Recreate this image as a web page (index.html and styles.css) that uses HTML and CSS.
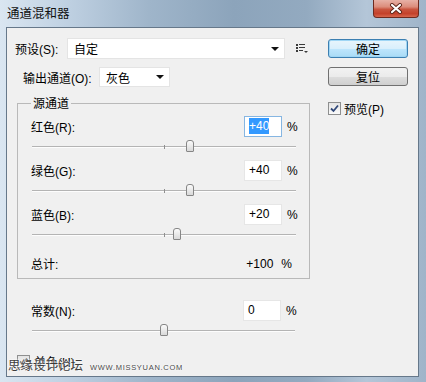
FILE: index.html
```html
<!DOCTYPE html>
<html>
<head>
    <meta charset="utf-8">
    <title>通道混和器</title>
    <link rel="stylesheet" href="styles.css">
</head>
<body>
<div class="window">
    <div class="titlebar">
        <span class="title">通道混和器</span>
        <span class="close">
            <svg width="14" height="11" viewBox="0 0 14 11">
                <path d="M3 2 L11 9 M11 2 L3 9" stroke="#5a2318" stroke-width="4" stroke-linecap="round"/>
                <path d="M3 2 L11 9 M11 2 L3 9" stroke="#fff" stroke-width="2.2" stroke-linecap="round"/>
            </svg>
        </span>
    </div>

    <div class="client">
        <div class="main">
            <div class="preset-row">
                <label class="lbl">预设(S):</label>
                <div class="select preset-select"><span>自定</span><i class="arrow"></i></div>
                <svg class="menu-icon" width="12" height="11" viewBox="0 0 12 11">
                    <rect x="0" y="1" width="2" height="2" fill="#3a3a3a"/>
                    <rect x="0" y="4" width="2" height="2" fill="#3a3a3a"/>
                    <rect x="0" y="7" width="2" height="2" fill="#3a3a3a"/>
                    <rect x="3" y="1" width="6" height="1" fill="#3a3a3a"/>
                    <rect x="3" y="4" width="6" height="1" fill="#3a3a3a"/>
                    <rect x="3" y="7" width="4" height="1" fill="#3a3a3a"/>
                    <path d="M8 8 L12 8 L10 10 Z" fill="#3a3a3a"/>
                </svg>
            </div>

            <div class="output-row">
                <label class="lbl">输出通道(O):</label>
                <div class="select output-select"><span>灰色</span><i class="arrow"></i></div>
            </div>

            <fieldset class="source">
                <legend>源通道</legend>

                <div class="channel">
                    <div class="head">
                        <label>红色(R):</label>
                        <span class="num focus"><span class="sel">+40</span></span>
                        <span class="pct">%</span>
                    </div>
                    <div class="slider"><div class="track"></div><span class="tick"></span><span class="thumb" style="left: 60%"></span></div>
                </div>

                <div class="channel">
                    <div class="head">
                        <label>绿色(G):</label>
                        <span class="num">+40</span>
                        <span class="pct">%</span>
                    </div>
                    <div class="slider"><div class="track"></div><span class="tick"></span><span class="thumb" style="left: 60%"></span></div>
                </div>

                <div class="channel">
                    <div class="head">
                        <label>蓝色(B):</label>
                        <span class="num">+20</span>
                        <span class="pct">%</span>
                    </div>
                    <div class="slider"><div class="track"></div><span class="tick"></span><span class="thumb" style="left: 55%"></span></div>
                </div>

                <div class="total">
                    <label>总计:</label>
                    <span class="total-val">+100</span>
                    <span>%</span>
                </div>
            </fieldset>

            <div class="channel constant">
                <div class="head">
                    <label>常数(N):</label>
                    <span class="num">0</span>
                    <span class="pct">%</span>
                </div>
                <div class="slider"><div class="track"></div><span class="tick"></span><span class="thumb" style="left: 50%"></span></div>
            </div>

            <div class="mono">
                <span class="check checked">
                    <svg width="11" height="11" viewBox="0 0 11 11"><path d="M2 5.5 L4.5 8 L9 2.5" stroke="#6f6f6f" stroke-width="1.8" fill="none"/></svg>
                </span>
                <span>单色(H)</span>
            </div>
        </div>

        <div class="side">
            <button class="btn default">确定</button>
            <button class="btn">复位</button>
            <div class="preview">
                <span class="check checked">
                    <svg width="11" height="11" viewBox="0 0 11 11"><path d="M2 5.5 L4.5 8 L9 2.5" stroke="#2f4778" stroke-width="1.8" fill="none"/></svg>
                </span>
                <span>预览(P)</span>
            </div>
        </div>
    </div>

    <div class="watermark">思缘设计论坛<small>WWW.MISSYUAN.COM</small></div>
</div>
</body>
</html>
```

FILE: styles.css
```css
body {
    margin: 0;
    font-family: "Liberation Sans", "Noto Sans CJK SC", sans-serif;
    font-size: 12px;
    color: #000;
}

/* window frame */
.window {
    position: relative;
    width: 426px;
    height: 382px;
    box-sizing: border-box;
    padding: 0 7px 5px 6px;
    display: flex;
    flex-direction: column;
    background: linear-gradient(90deg, #dae6f1 0%, #c2d3e4 14%, #9fb5ca 35%, #8ca4bb 55%, #93aac0 72%, #b4c6d8 86%, #9fb4c9 100%);
}

.titlebar {
    height: 27px;
    display: flex;
    justify-content: space-between;
    align-items: flex-start;
}

.title {
    font-family: "Noto Sans CJK SC", sans-serif;
    font-size: 12.5px;
    line-height: 16px;
    margin: 5px 0 0 1px;
    color: #111;
}

.close {
    width: 46px;
    height: 18px;
    box-sizing: border-box;
    border: 1px solid #6e2a1f;
    border-top: none;
    border-radius: 0 0 4px 4px;
    background: linear-gradient(#e7b1a6 0%, #dc8d7c 40%, #c9553f 55%, #c4412b 80%, #d7664d 100%);
    display: flex;
    align-items: center;
    justify-content: center;
}

.client {
    flex: 1;
    display: flex;
    background: #f0f0f0;
    border: 1px solid #66788a;
}

/* left column */
.main {
    width: 310px;
    padding-top: 10px;
}

.preset-row {
    display: flex;
    align-items: center;
    height: 21px;
    padding-left: 8px;
}

.preset-row .lbl {
    width: 52px;
}

.select {
    height: 21px;
    box-sizing: border-box;
    display: flex;
    align-items: center;
    padding-left: 6px;
    background: #fff;
    border: 1px solid #e4e4e4;
    font-family: "Noto Sans CJK SC", sans-serif;
}

.preset-select {
    width: 218px;
}

.arrow {
    margin-left: auto;
    margin-right: 5px;
    border-left: 4px solid transparent;
    border-right: 4px solid transparent;
    border-top: 4px solid #111;
}

.menu-icon {
    margin-left: 11px;
}

.output-row {
    display: flex;
    align-items: center;
    height: 20px;
    margin-top: 8px;
    padding-left: 16px;
}

.output-row .lbl {
    width: 76px;
}

.output-select {
    width: 71px;
    height: 20px;
}

/* source channels group */
.source {
    width: 293px;
    box-sizing: border-box;
    margin: 8px 0 0 10px;
    padding: 5px 12px 4px 13px;
    border: 1px solid #b9b9b9;
    min-inline-size: 0;
}

.source legend {
    padding: 0 2px;
    line-height: 16px;
    font-family: "Noto Sans CJK SC", sans-serif;
}

.channel {
    height: 44px;
}

.head {
    display: flex;
    align-items: center;
    height: 21px;
}

.head label {
    flex: 1;
}

.num {
    width: 38px;
    height: 21px;
    box-sizing: border-box;
    padding-left: 4px;
    line-height: 19px;
    background: #fff;
    border: 1px solid #e6e6e6;
}

.num.focus {
    border-color: #86b6e2;
}

.sel {
    background: #3399ff;
    color: #fff;
    padding: 1px 0;
}

.pct {
    width: 10px;
    margin-left: 5px;
}

.slider {
    position: relative;
    height: 23px;
    box-sizing: border-box;
    padding-top: 9px;
    margin: 0 1px;
}

.track {
    height: 1px;
    background: #b4b4b4;
    border-bottom: 1px solid #fdfdfd;
}

.tick {
    position: absolute;
    left: 50%;
    top: 8px;
    width: 1px;
    height: 4px;
    background: #8f8f8f;
}

.thumb {
    position: absolute;
    top: 3px;
    width: 8px;
    height: 12px;
    margin-left: -4px;
    box-sizing: border-box;
    border: 1px solid #868686;
    border-radius: 3px 3px 1px 1px;
    background: linear-gradient(#fbfbfb, #d9d9d9);
}

.total {
    display: flex;
    align-items: center;
    height: 21px;
    margin-top: 5px;
    padding-right: 5px;
}

.total label {
    flex: 1;
}

.total-val {
    margin-right: 8px;
}

.constant {
    width: 265px;
    margin: 21px 0 0 24px;
}

.mono {
    display: flex;
    align-items: center;
    gap: 4px;
    margin: 11px 0 0 10px;
    height: 13px;
}

.check {
    width: 13px;
    height: 13px;
    box-sizing: border-box;
    border: 1px solid #8e8f8f;
    background: linear-gradient(#e4e4e4, #fafafa);
    display: flex;
    align-items: center;
    justify-content: center;
}

/* right column */
.side {
    width: 80px;
    margin-left: 11px;
    padding-top: 11px;
    display: flex;
    flex-direction: column;
}

.btn {
    width: 80px;
    height: 19px;
    padding: 0;
    font-family: "Noto Sans CJK SC", sans-serif;
    font-size: 12px;
    line-height: 17px;
    color: #000;
    border: 1px solid #707070;
    border-radius: 3px;
    background: linear-gradient(#f2f2f2 0%, #ebebeb 50%, #dddddd 51%, #cfcfcf 100%);
}

.btn + .btn {
    margin-top: 9px;
}

.btn.default {
    border-color: #3c7fb1;
    background: linear-gradient(#e8f5fc 0%, #d9effc 50%, #bee6fd 51%, #a9dbf6 100%);
    box-shadow: inset 0 0 0 1px #9fd6f5;
}

.preview {
    display: flex;
    align-items: center;
    gap: 3px;
    margin-top: 14px;
}

/* forum watermark */
.watermark {
    position: absolute;
    left: 8px;
    top: 357px;
    font-family: "Noto Sans CJK SC", sans-serif;
    font-size: 12.5px;
    line-height: 16px;
    color: #3c3c3c;
    text-shadow: 0 0 2px #fff, 0 0 2px #fff;
}

.watermark small {
    margin-left: 7px;
    font-family: "Liberation Sans", sans-serif;
    font-size: 7.5px;
    letter-spacing: 0.7px;
    color: #4a4a4a;
}
```
